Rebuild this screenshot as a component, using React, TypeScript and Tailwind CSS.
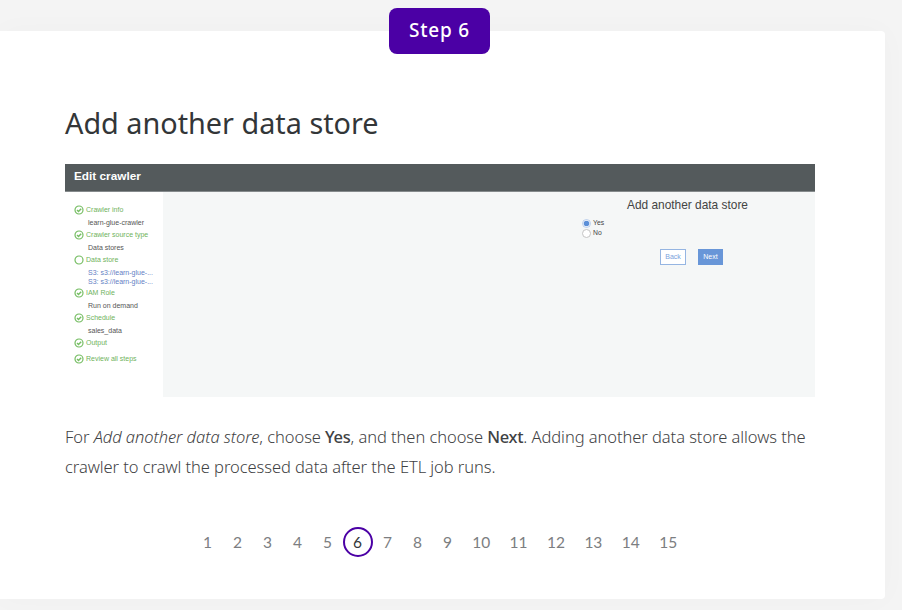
import React from "react";

type Step = { label: string; kind: "done" | "open" | "value" | "link"; cls: string };

const steps: Step[] = [
  { label: "Crawler info", kind: "done", cls: "h-[12.4px]" },
  { label: "learn-glue-crawler", kind: "value", cls: "h-[12.4px]" },
  { label: "Crawler source type", kind: "done", cls: "h-[12.4px]" },
  { label: "Data stores", kind: "value", cls: "h-[12.4px]" },
  { label: "Data store", kind: "open", cls: "h-[12.4px]" },
  { label: "S3: s3://learn-glue-...", kind: "link", cls: "mt-[2px] h-[9px]" },
  { label: "S3: s3://learn-glue-...", kind: "link", cls: "h-[9px]" },
  { label: "IAM Role", kind: "done", cls: "mt-[1px] h-[12.4px]" },
  { label: "Run on demand", kind: "value", cls: "h-[12.4px]" },
  { label: "Schedule", kind: "done", cls: "h-[12.4px]" },
  { label: "sales_data", kind: "value", cls: "h-[12.4px]" },
  { label: "Output", kind: "done", cls: "h-[12.4px]" },
  { label: "Review all steps", kind: "done", cls: "mt-[4px] h-[12.4px]" },
];

const colors = {
  done: "text-[#6fb35c]",
  open: "text-[#6fb35c]",
  value: "pl-[14px] text-[#555]",
  link: "pl-[14px] text-[#6480c4]",
};

function StatusIcon({ checked }: { checked: boolean }) {
  return (
    <svg viewBox="0 0 10 10" className="mr-[2px] size-[10px] shrink-0" fill="none" stroke="#75bd62" strokeWidth="1.2">
      <circle cx="5" cy="5" r="4" />
      {checked && <path d="M3 5.1 4.5 6.5 7.2 3.7" strokeWidth="1.4" />}
    </svg>
  );
}

function CrawlerPanel() {
  return (
    <div className="mt-[21px] h-[233px] w-[750px] font-['Liberation_Sans',Arial,sans-serif]">
      <div className="flex h-[28px] items-center border-b border-[#858a8c] bg-[#545a5c] pb-[1px] pl-[9px] text-[11.8px] font-bold text-white">
        Edit crawler
      </div>
      <div className="flex h-[205px]">
        <div className="w-[98px] shrink-0 pt-[11.8px] pl-[9px]">
          {steps.map((s, i) => (
            <div key={i} className={`flex items-center text-[7px] leading-none whitespace-nowrap ${colors[s.kind]} ${s.cls}`}>
              {(s.kind === "done" || s.kind === "open") && <StatusIcon checked={s.kind === "done"} />}
              {s.label}
            </div>
          ))}
        </div>
        <div className="flex-1 bg-[#f5f7f7] pt-[5px] pl-[419px] text-[#444]">
          <div className="pl-[45px] text-[11.9px] leading-[16px] whitespace-nowrap">Add another data store</div>
          <div className="mt-[5px] flex h-[10px] items-center gap-[2px] text-[6.8px]">
            <svg viewBox="0 0 9 9" className="size-[9px]">
              <circle cx="4.5" cy="4.5" r="4" fill="#fff" stroke="#a9c2e6" strokeWidth="0.8" />
              <circle cx="4.5" cy="4.5" r="2.8" fill="#5b8fd8" />
            </svg>
            Yes
          </div>
          <div className="flex h-[11px] items-center gap-[2px] text-[6.8px]">
            <span className="size-[9px] rounded-full border border-[#c4c4c4] bg-white" />
            No
          </div>
          <div className="mt-[10px] flex gap-[12px] pl-[78px] text-[7px]">
            <span className="flex h-[16px] w-[26px] items-center justify-center border border-[#95b5e2] bg-white text-[#7ba2dc]">Back</span>
            <span className="flex h-[16px] w-[25px] items-center justify-center bg-[#6896d8] text-white">Next</span>
          </div>
        </div>
      </div>
    </div>
  );
}

export default function App() {
  return (
    <div className="h-[610px] w-[902px] overflow-hidden bg-[#f4f4f4] pt-[8px] font-['Noto_Sans',sans-serif]">
      <div className="pt-[23px]">
        <main className="flex h-[568px] w-[885px] flex-col rounded-r-[4px] bg-white pl-[65px] shadow-[0_0_30px_rgba(0,0,0,0.025)]">
          <div className="-mt-[23px] ml-[324px] flex h-[46px] w-[101px] shrink-0 items-center justify-center rounded-[8px] bg-[#4b00a5] pb-[1px] text-[19px] font-medium tracking-[0.8px] text-white">
            Step 6
          </div>
          <h1 className="mt-[49px] h-[40px] text-[28.8px] leading-[40px] font-normal whitespace-nowrap text-[#333638]">
            Add another data store
          </h1>
          <CrawlerPanel />
          <p className="mt-[25px] text-[16.5px] leading-[30px] font-light tracking-[-0.06px] whitespace-nowrap text-[#3f4244]">
            For <em>Add another data store</em>, choose <b className="font-medium tracking-[-0.3px]">Yes</b>, and then choose{" "}
            <b className="font-medium tracking-[-0.3px]">Next</b>. Adding another data store allows the
            <br />
            crawler to crawl the processed data after the ETL job runs.
          </p>
          <nav className="mt-[45px] flex pl-[128px] font-['Lato',sans-serif] text-[15.5px] text-[#7c7e81]">
            {Array.from({ length: 15 }, (_, i) => i + 1).map((n) => (
              <span
                key={n}
                className={`flex h-[30px] items-center justify-center pt-[1px] ${n > 9 ? "w-[37.4px] pr-[1px]" : "w-[30px] pr-[1px]"} ${
                  n === 6 ? "rounded-full border-2 border-[#4b00a5] text-[#333638]" : ""
                }`}
              >
                {n}
              </span>
            ))}
          </nav>
        </main>
      </div>
    </div>
  );
}
